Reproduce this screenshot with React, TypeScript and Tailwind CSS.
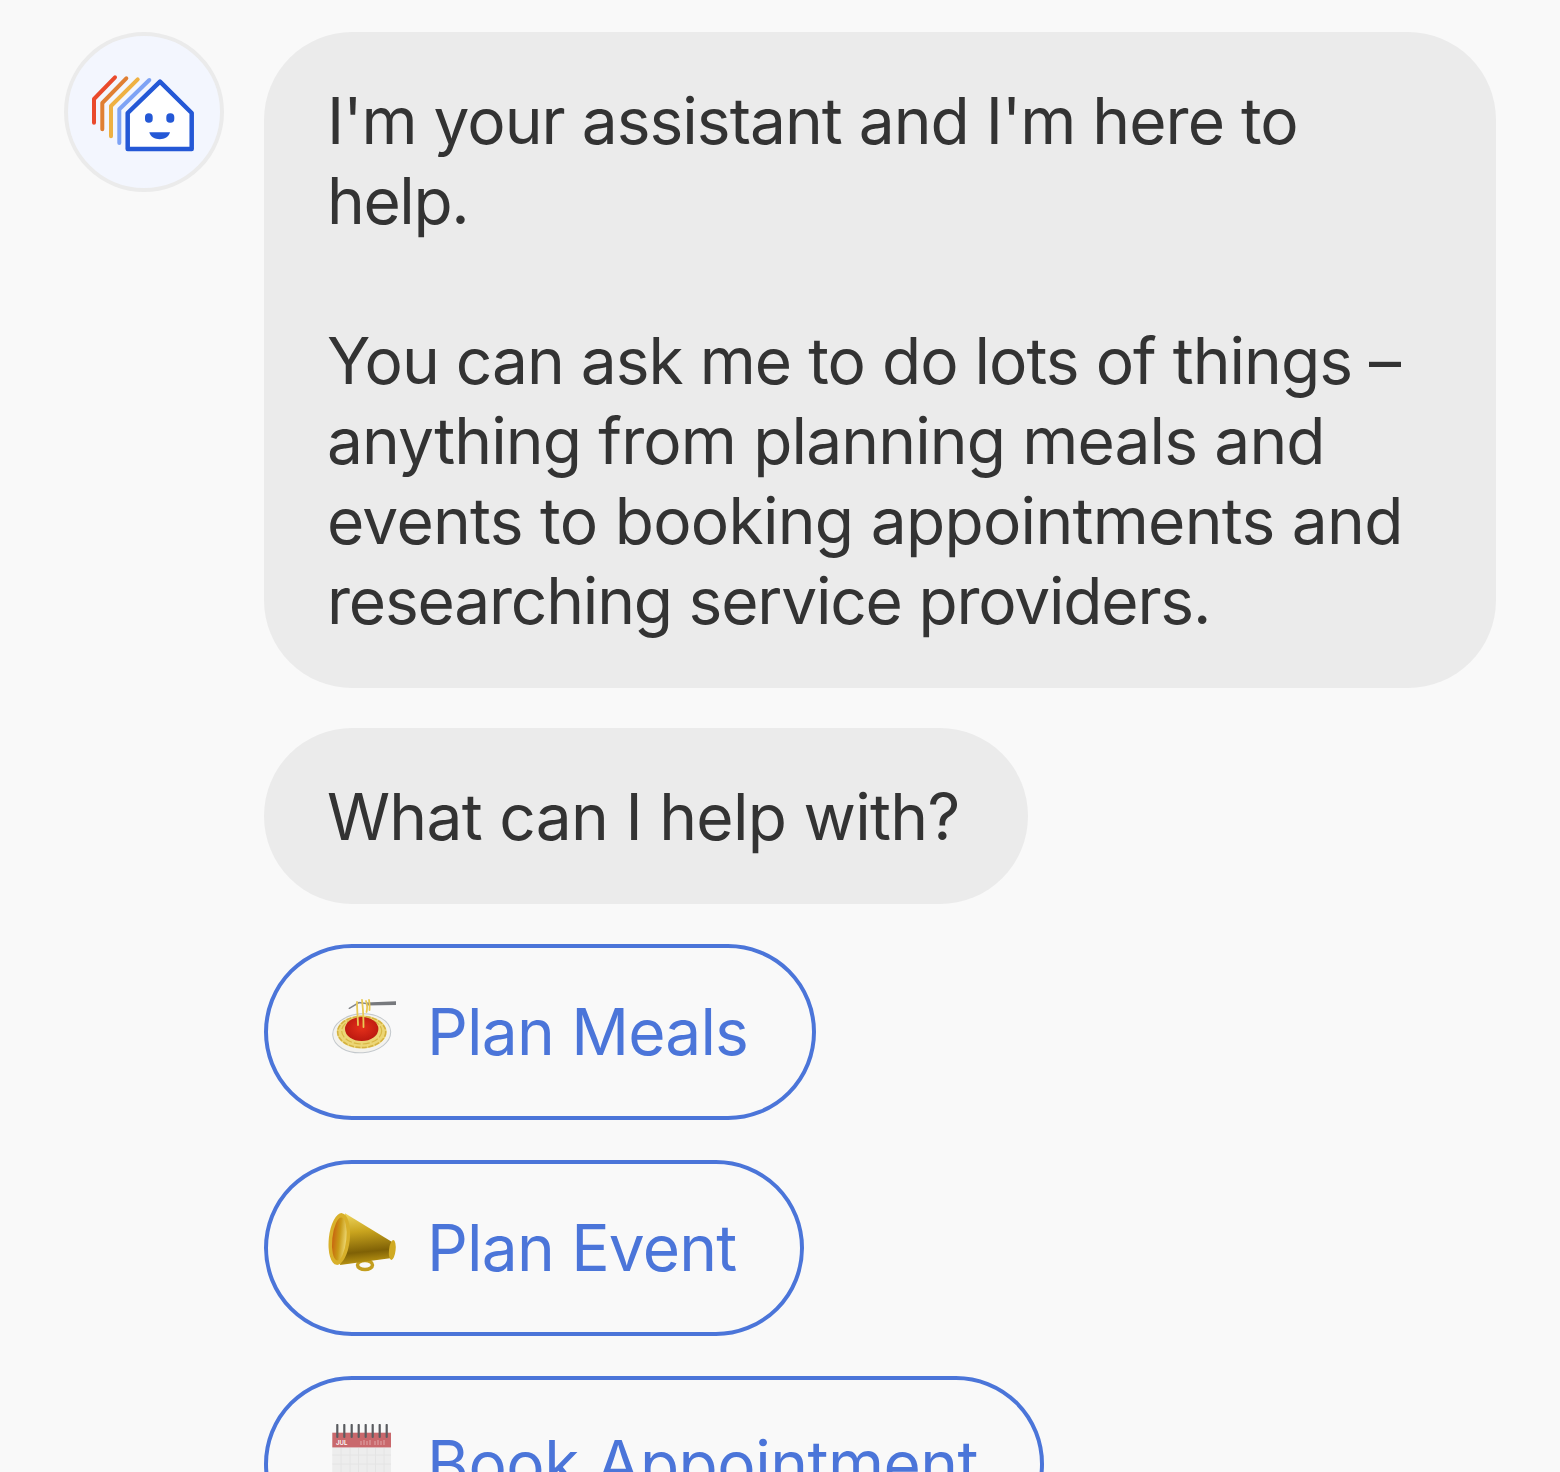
import React from "react";

function Avatar() {
  return (
    <div className="w-[160px] h-[160px] shrink-0 rounded-full border-4 border-[#ebebeb] bg-[#f3f6fe] flex items-center justify-center">
      <svg width="152" height="152" viewBox="0 0 152 152" fill="none" strokeLinecap="round" strokeLinejoin="round">
        <path d="M26 86.700V63L47 41.300" stroke="#ea4a2c" strokeWidth="4" />
        <path d="M34.300 93.300V67L58.300 42.300" stroke="#e07f33" strokeWidth="4" />
        <path d="M43 100.300V70L69.700 43.300" stroke="#efb142" strokeWidth="4" />
        <path d="M51.300 107V73.300L81.300 44" stroke="#7ea3f5" strokeWidth="4" />
        <path d="M59.700 113V77L92 45.700L123.700 77V113Z" fill="#fff" stroke="#2458d6" strokeWidth="4.500" />
        <rect x="77" y="77.300" width="7.700" height="9.400" rx="3.800" fill="#2458d6" />
        <rect x="98.300" y="77.300" width="8" height="9.400" rx="3.800" fill="#2458d6" />
        <path d="M81.300 96.300H102C100 105.500 83.300 105.500 81.300 96.300Z" fill="#2458d6" />
      </svg>
    </div>
  );
}

function Spaghetti() {
  return (
    <svg width="72" height="72" viewBox="0 0 72 72" fill="none">
      <defs>
        <radialGradient id="sauce" cx="0.500" cy="0.450" r="0.600">
          <stop offset="0" stopColor="#e4301a" />
          <stop offset="1" stopColor="#b8170f" />
        </radialGradient>
      </defs>
      <ellipse cx="33.700" cy="37.300" rx="29" ry="19.500" fill="#f3f2ee" stroke="#c3c8cc" strokeWidth="1" transform="rotate(-4 33.700 37.300)" />
      <ellipse cx="33.700" cy="36" rx="25" ry="16.500" fill="#ecd676" />
      <ellipse cx="33.700" cy="36" rx="24" ry="15.500" stroke="#d4b140" strokeWidth="1.500" strokeDasharray="5 1.500" />
      <ellipse cx="33.700" cy="35" rx="20" ry="13" stroke="#d9b845" strokeWidth="1.200" strokeDasharray="7 2" />
      <ellipse cx="33.700" cy="33" rx="16.700" ry="12" fill="url(#sauce)" />
      <path d="M21.300 12.300L31 6.500L38 7.500" stroke="#84868a" strokeWidth="1.500" strokeLinecap="round" />
      <path d="M38 6.500L68 5.300V9L38 9.500Z" fill="#77797d" />
      <path d="M29 6C29 14 30 24 30 29M34 4C35 12 35.500 26 35.500 31M38 5C40 10 39 14 38.500 16M41 4C42 10 41.500 12 41.500 14" stroke="#e9c955" strokeWidth="1.800" strokeLinecap="round" />
    </svg>
  );
}

function Megaphone() {
  return (
    <svg width="72" height="72" viewBox="0 0 72 72" fill="none">
      <defs>
        <linearGradient id="horn" x1="0.350" y1="0" x2="0.450" y2="1">
          <stop offset="0" stopColor="#ecd35c" />
          <stop offset="0.350" stopColor="#c9a41e" />
          <stop offset="0.750" stopColor="#7f6106" />
          <stop offset="1" stopColor="#c09a14" />
        </linearGradient>
        <linearGradient id="mouth" x1="0" y1="0" x2="1" y2="0">
          <stop offset="0" stopColor="#c8640f" />
          <stop offset="0.500" stopColor="#c89a16" />
          <stop offset="1" stopColor="#ecd670" />
        </linearGradient>
      </defs>
      <ellipse cx="37" cy="53" rx="7.500" ry="4.500" stroke="#c39e1e" strokeWidth="3.500" />
      <path d="M17 1.300L63.700 29.700L62 46.300L12 53Z" fill="url(#horn)" />
      <ellipse cx="64.300" cy="38" rx="3.300" ry="10" transform="rotate(6 64.300 38)" fill="#d0aa22" />
      <ellipse cx="11.300" cy="27" rx="10.500" ry="26" transform="rotate(6 11.300 27)" fill="#d8b02a" />
      <ellipse cx="11.300" cy="27" rx="7" ry="21.500" transform="rotate(6 11.300 27)" fill="url(#mouth)" />
    </svg>
  );
}

function Calendar() {
  return (
    <svg width="72" height="80" viewBox="0 0 72 80" fill="none">
      <rect x="4.300" y="8.700" width="58.700" height="71" fill="#ededed" />
      <rect x="4.300" y="8.700" width="58.700" height="14.700" fill="#c9686c" />
      <path d="M13 24V72M22 24V72M30.500 24V72M39 24V72M47.500 24V72M56 24V72M4.300 31H63M4.300 40H63" stroke="#e4e4e4" strokeWidth="1" />
      <path d="M9.300 1V13M16.300 1V13M23.700 1V13M30.700 1V13M37.700 1V13M44.700 1V13M51.700 1V13M58.700 1V13" stroke="#5a5c60" strokeWidth="2.200" strokeLinecap="round" />
      <path d="M33 21V17M36 21V16M39 21V17M42 21V16M47 21V17M50 21V16M53 21V17M56 21V16" stroke="#dc9ea0" strokeWidth="1.200" />
      <text x="8" y="21" fontSize="6" fontWeight="600" fill="#ffffff" fontFamily="Inter, sans-serif" letterSpacing="0">JUL</text>
    </svg>
  );
}

function Chip({ icon, label, width, tracking }: { icon: React.ReactNode; label: string; width: string; tracking: string }) {
  return (
    <button className={`h-[176px] ${width} rounded-[88px] border-4 border-[#4b75d9] pl-[60px] flex items-center gap-[27px] text-[#4b75d9] text-left shrink-0`}>
      <span className="w-[72px] flex items-center justify-start shrink-0">{icon}</span>
      <span className={`whitespace-nowrap ${tracking}`}>{label}</span>
    </button>
  );
}

export default function App() {
  return (
    <div className="w-[1560px] h-[1472px] overflow-hidden bg-[#f9f9f9] flex items-start gap-[40px] pl-[64px] pt-[32px] text-[64px] leading-[80px] text-[#333333] font-['Inter','Liberation_Sans',sans-serif] tracking-[-1px]">
      <Avatar />
      <div className="flex flex-col items-start gap-[40px] w-[1232px]">
        <div className="rounded-[88px] bg-[#ebebeb] pl-[63px] pr-[60px] pt-[49px] pb-[47px] w-full">
          <p>
            <span className="tracking-[-0.97px]">I'm your assistant and I'm here to</span><br />
            <span className="tracking-[-1.4px]">help.</span>
          </p>
          <p className="mt-[80px]">
            <span className="tracking-[-0.98px]">You can ask me to do lots of things –</span><br />
            <span className="tracking-[-0.86px]">anything from planning meals and</span><br />
            <span className="tracking-[-0.7px]">events to booking appointments and</span><br />
            <span className="tracking-[-1.2px]">researching service providers.</span>
          </p>
        </div>
        <div className="rounded-[88px] bg-[#ebebeb] pl-[63px] pt-[49px] pb-[47px] whitespace-nowrap w-[764px] tracking-[-0.7px]">What can I help with?</div>
        <Chip icon={<Spaghetti />} label="Plan Meals" width="w-[552px]" tracking="tracking-[-0.8px]" />
        <Chip icon={<Megaphone />} label="Plan Event" width="w-[540px]" tracking="tracking-[-0.8px]" />
        <Chip icon={<Calendar />} label="Book Appointment" width="w-[780px]" tracking="tracking-[-0.5px]" />
      </div>
    </div>
  );
}
